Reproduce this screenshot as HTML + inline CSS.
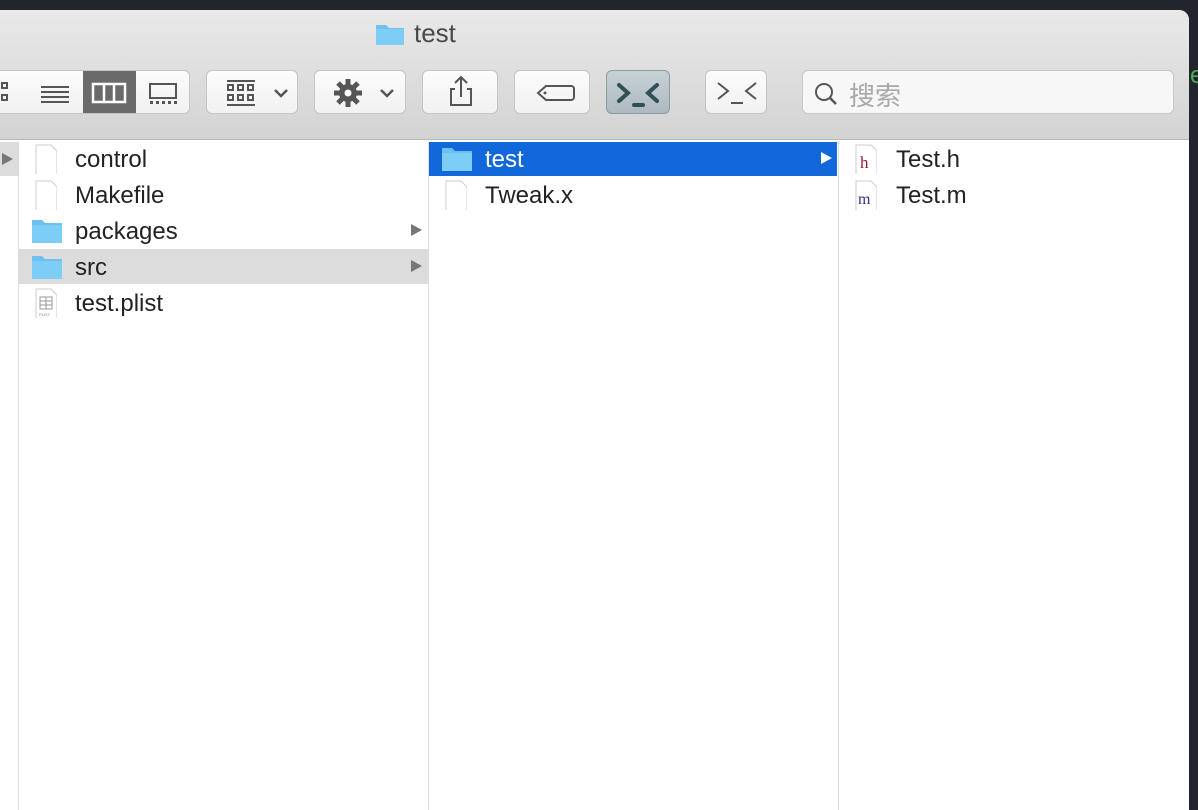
<!DOCTYPE html>
<html><head><meta charset="utf-8"><style>
*{margin:0;padding:0;box-sizing:border-box}
body{width:1198px;height:802px;background:#22252e;position:relative;overflow:hidden;font-family:"Liberation Sans","Noto Sans CJK SC",sans-serif}
.win{position:absolute;left:0;top:10px;width:1189px;height:800px;background:#fff;border-top-right-radius:10px;overflow:hidden}
.tb{position:absolute;left:0;top:0;width:100%;height:130px;background:linear-gradient(#e9e9e9,#d3d3d3);border-bottom:1px solid #b8b8b8}
.title{position:absolute;top:8px;font-size:26px;color:#4a4a4a}
.btn{position:absolute;top:60px;height:44px;background:linear-gradient(#fcfcfc,#f1f1f1);border:1px solid #c4c4c4;border-radius:6px}
.col{position:absolute;top:131px;bottom:0;border-right:1px solid #dcdcdc}
.row{position:absolute;height:34px;font-size:24px;color:#222;line-height:36px}
.doc{position:absolute;width:22px;height:30px}
.arr{position:absolute;width:0;height:0;border-top:6px solid transparent;border-bottom:6px solid transparent;border-left:11px solid #777}
</style></head><body>
<div class="win">
<div class="tb">
 <svg style="position:absolute;left:375px;top:12px" width="30" height="24"><path d="M1 3h10l3 3h15v17H1z" fill="#6cc1f2"/><path d="M1 7h28v16H1z" fill="#7dcdf7"/></svg>
 <div class="title" style="left:414px">test</div>
 <div class="btn" style="left:-10px;width:200px;overflow:hidden">
  <div style="position:absolute;left:92px;top:0;width:53px;height:44px;background:#6a6a6a"></div>
  <svg style="position:absolute;left:0;top:0" width="200" height="44">
   <g fill="none" stroke="#555" stroke-width="2"><rect x="11" y="12" width="5" height="5"/><rect x="11" y="24" width="5" height="5"/></g>
   <g stroke="#555" stroke-width="2"><path d="M50 16h28M50 21h28M50 26h28M50 31h28"/></g>
   <g fill="none" stroke="#fff" stroke-width="2.5"><rect x="102" y="13" width="32" height="18"/><path d="M113 13v18M123 13v18"/></g>
   <g fill="none" stroke="#555" stroke-width="2"><rect x="159" y="13" width="26" height="14"/></g>
   <g fill="#555"><rect x="159" y="30" width="3" height="3"/><rect x="165" y="30" width="3" height="3"/><rect x="171" y="30" width="3" height="3"/><rect x="177" y="30" width="3" height="3"/><rect x="183" y="30" width="3" height="3"/></g>
  </svg>
 </div>
 <div class="btn" style="left:206px;width:92px"><svg width="92" height="44"><g fill="none" stroke="#555" stroke-width="2"><path d="M20 10h28M20 34h28"/><rect x="21" y="14" width="5" height="5"/><rect x="31" y="14" width="5" height="5"/><rect x="41" y="14" width="5" height="5"/><rect x="21" y="24" width="5" height="5"/><rect x="31" y="24" width="5" height="5"/><rect x="41" y="24" width="5" height="5"/><path d="M68 19l6 6 6-6" stroke-width="2.5"/></g></svg></div>
 <div class="btn" style="left:314px;width:92px"><svg width="92" height="44"><g transform="translate(33 22)"><circle r="9" fill="#555"/><g stroke="#555" stroke-width="5"><path d="M0-14V14M-14 0H14M-10-10L10 10M-10 10L10-10"/></g><circle r="3.5" fill="#fafafa"/></g><path d="M66 19l6 6 6-6" fill="none" stroke="#555" stroke-width="2.5"/></svg></div>
 <div class="btn" style="left:422px;width:76px"><svg width="76" height="44"><g fill="none" stroke="#555" stroke-width="2"><path d="M32 18h-4v16h20V18h-4M38 26V6M32 12l6-6 6 6"/></g></svg></div>
 <div class="btn" style="left:514px;width:76px"><svg width="76" height="44"><path d="M31 15h25a3 3 0 0 1 3 3v8a3 3 0 0 1-3 3H31l-8-7z" fill="none" stroke="#555" stroke-width="2"/><circle cx="30" cy="22" r="1.5" fill="#555"/></svg></div>
 <div class="btn" style="left:606px;width:64px;background:linear-gradient(#c7d1d6,#aeb9bf);border-color:#8d9aa1"><svg width="64" height="44"><g fill="none" stroke="#2f5057" stroke-width="4" stroke-linecap="round"><path d="M12 14l9 8-9 8M50 14l-9 8 9 8M27 34h9"/></g></svg></div>
 <div class="btn" style="left:705px;width:62px"><svg width="62" height="44"><g fill="none" stroke="#555" stroke-width="2"><path d="M12 12l10 8-10 8M50 12l-10 8 10 8M25 32h12"/></g></svg></div>
 <div class="btn" style="left:802px;width:372px;background:#f7f7f7;border-color:#c8c8c8"><svg style="position:absolute;left:10px;top:10px" width="26" height="26"><circle cx="11" cy="11" r="8" fill="none" stroke="#555" stroke-width="2"/><path d="M17 17l6 6" stroke="#555" stroke-width="2.5"/></svg><span style="position:absolute;left:46px;top:5px;font-size:26px;color:#a8a8a8">搜索</span></div>
</div>
<div class="col" style="left:0;width:19px;background:#fff"><div style="position:absolute;top:1px;left:0;width:18px;height:34px;background:#dcdcdc"></div><div class="arr" style="left:2px;top:12px"></div></div>
<div class="col" style="left:19px;width:410px"></div>
<div class="col" style="left:429px;width:410px"></div>
<div style="position:absolute;left:19px;top:239px;width:409px;height:35px;background:#dcdcdc"></div>
<svg class="doc" style="left:35px;top:134px" width="24" height="32"><path d="M1 1h15l6 6v24H1z" fill="#fff" stroke="#ccc"/></svg><div class="row" style="left:75px;top:132px">control</div>
<svg class="doc" style="left:35px;top:170px" width="24" height="32"><path d="M1 1h15l6 6v24H1z" fill="#fff" stroke="#ccc"/></svg><div class="row" style="left:75px;top:168px">Makefile</div>
<svg style="position:absolute;left:31px;top:208px" width="32" height="26"><path d="M1 2h10l3 3h17v20H1z" fill="#6cc1f2"/><path d="M1 7h30v18H1z" fill="#7dcdf7"/></svg><div class="row" style="left:75px;top:204px">packages</div><div class="arr" style="left:411px;top:214px"></div>
<svg style="position:absolute;left:31px;top:244px" width="32" height="26"><path d="M1 2h10l3 3h17v20H1z" fill="#6cc1f2"/><path d="M1 7h30v18H1z" fill="#7dcdf7"/></svg><div class="row" style="left:75px;top:240px">src</div><div class="arr" style="left:411px;top:250px"></div>
<svg class="doc" style="left:35px;top:278px" width="24" height="32"><path d="M1 1h15l6 6v24H1z" fill="#fff" stroke="#ccc"/><rect x="5" y="9" width="12" height="12" fill="none" stroke="#999"/><path d="M5 13h12M5 17h12M11 9v12" stroke="#999"/><text x="4" y="28" font-size="4" fill="#888">PLIST</text></svg><div class="row" style="left:75px;top:276px">test.plist</div>
<div style="position:absolute;left:429px;top:132px;width:408px;height:34px;background:#1268da"></div>
<svg style="position:absolute;left:441px;top:136px" width="32" height="26"><path d="M1 2h10l3 3h17v20H1z" fill="#6cc1f2"/><path d="M1 7h30v18H1z" fill="#7dcdf7"/></svg><div class="row" style="left:485px;top:132px;color:#fff">test</div><div class="arr" style="left:821px;top:142px;border-left-color:#fff"></div>
<svg class="doc" style="left:445px;top:170px" width="24" height="32"><path d="M1 1h15l6 6v24H1z" fill="#fff" stroke="#ccc"/></svg><div class="row" style="left:485px;top:168px">Tweak.x</div>
<svg class="doc" style="left:855px;top:134px" width="24" height="32"><path d="M1 1h15l6 6v24H1z" fill="#fff" stroke="#ccc"/><text x="5" y="24" font-family="Liberation Serif" font-size="17" fill="#a0182c">h</text></svg><div class="row" style="left:896px;top:132px">Test.h</div>
<svg class="doc" style="left:855px;top:170px" width="24" height="32"><path d="M1 1h15l6 6v24H1z" fill="#fff" stroke="#ccc"/><text x="3" y="24" font-family="Liberation Serif" font-size="16" fill="#3a2a8a">m</text></svg><div class="row" style="left:896px;top:168px">Test.m</div>
</div>
<div style="position:absolute;left:1190px;top:62px;font-size:24px;color:#4caf50">e</div>
</body></html>
